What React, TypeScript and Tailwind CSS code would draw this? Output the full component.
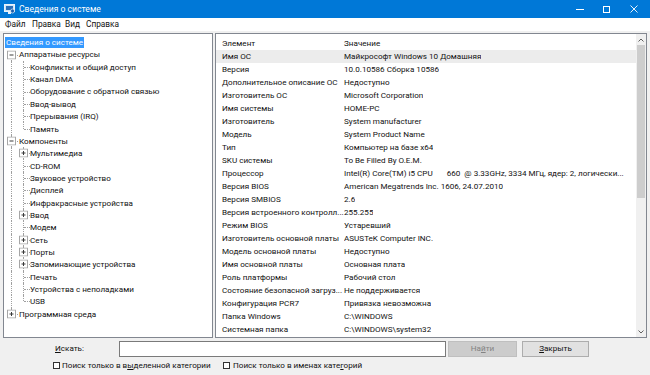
import React from 'react';

type TreeItem = {
    label: string;
    level: 0 | 1 | 2;
    box?: 'plus' | 'minus';
    first?: boolean;
    last?: boolean;
    selected?: boolean;
};

const tree: TreeItem[] = [
    { label: 'Сведения о системе', level: 0, selected: true },
    { label: 'Аппаратные ресурсы', level: 1, box: 'minus', first: true },
    { label: 'Конфликты и общий доступ', level: 2 },
    { label: 'Канал DMA', level: 2 },
    { label: 'Оборудование с обратной связью', level: 2 },
    { label: 'Ввод-вывод', level: 2 },
    { label: 'Прерывания (IRQ)', level: 2 },
    { label: 'Память', level: 2, last: true },
    { label: 'Компоненты', level: 1, box: 'minus' },
    { label: 'Мультимедиа', level: 2, box: 'plus' },
    { label: 'CD-ROM', level: 2 },
    { label: 'Звуковое устройство', level: 2 },
    { label: 'Дисплей', level: 2 },
    { label: 'Инфракрасные устройства', level: 2 },
    { label: 'Ввод', level: 2, box: 'plus' },
    { label: 'Модем', level: 2 },
    { label: 'Сеть', level: 2, box: 'plus' },
    { label: 'Порты', level: 2, box: 'plus' },
    { label: 'Запоминающие устройства', level: 2, box: 'plus' },
    { label: 'Печать', level: 2 },
    { label: 'Устройства с неполадками', level: 2 },
    { label: 'USB', level: 2, last: true },
    { label: 'Программная среда', level: 1, box: 'plus', last: true },
];

const rows: [string, string][] = [
    ['Имя ОС', 'Майкрософт Windows 10 Домашняя'],
    ['Версия', '10.0.10586 Сборка 10586'],
    ['Дополнительное описание ОС', 'Недоступно'],
    ['Изготовитель ОС', 'Microsoft Corporation'],
    ['Имя системы', 'HOME-PC'],
    ['Изготовитель', 'System manufacturer'],
    ['Модель', 'System Product Name'],
    ['Тип', 'Компьютер на базе x64'],
    ['SKU системы', 'To Be Filled By O.E.M.'],
    ['Процессор', 'Intel(R) Core(TM) i5 CPU       660  @ 3.33GHz, 3334 МГц, ядер: 2, логически...'],
    ['Версия BIOS', 'American Megatrends Inc. 1606, 24.07.2010'],
    ['Версия SMBIOS', '2.6'],
    ['Версия встроенного контролл...', '255.255'],
    ['Режим BIOS', 'Устаревший'],
    ['Изготовитель основной платы', 'ASUSTeK Computer INC.'],
    ['Модель основной платы', 'Недоступно'],
    ['Имя основной платы', 'Основная плата'],
    ['Роль платформы', 'Рабочий стол'],
    ['Состояние безопасной загруз...', 'Не поддерживается'],
    ['Конфигурация PCR7', 'Привязка невозможна'],
    ['Папка Windows', 'C:\\WINDOWS'],
    ['Системная папка', 'C:\\WINDOWS\\system32'],
];

function ExpandBox({ kind }: { kind: 'plus' | 'minus' }) {
    return (
        <svg width="9" height="9" viewBox="0 0 9 9" className="absolute left-[1px] top-1/2 -translate-y-1/2">
            <rect x="0.5" y="0.5" width="8" height="8" fill="#fff" stroke="#a6a6a6" />
            <line x1="2.5" y1="4.5" x2="6.5" y2="4.5" stroke="#3a3a3a" />
            {kind === 'plus' && <line x1="4.5" y1="2.5" x2="4.5" y2="6.5" stroke="#3a3a3a" />}
        </svg>
    );
}

// one 12px indent column of the tree with its dotted connector lines
function Guide({ vert, horiz, box }: { vert: 'full' | 'top' | 'bottom' | 'none'; horiz?: boolean; box?: 'plus' | 'minus' }) {
    return (
        <div className="relative w-[12px] h-full shrink-0">
            {vert === 'full' && <div className="absolute left-[5px] top-0 bottom-0 border-l border-dotted border-[#a0a0a0]" />}
            {vert === 'top' && <div className="absolute left-[5px] top-0 h-1/2 border-l border-dotted border-[#a0a0a0]" />}
            {vert === 'bottom' && <div className="absolute left-[5px] top-1/2 bottom-0 border-l border-dotted border-[#a0a0a0]" />}
            {horiz && <div className="absolute left-[6px] right-0 top-1/2 border-t border-dotted border-[#a0a0a0]" />}
            {box && <ExpandBox kind={box} />}
        </div>
    );
}

function TreeRow({ item, parentLastDone }: { item: TreeItem; parentLastDone: boolean }) {
    if (item.level === 0) {
        return (
            <div className="h-[12.35px] flex items-center">
                <span className="bg-[#3399ff] text-white px-[1px] leading-[11px]">{item.label}</span>
            </div>
        );
    }
    if (item.level === 1) {
        return (
            <div className="h-[12.35px] flex items-center pl-[1px]">
                <Guide vert={item.first ? 'bottom' : item.last ? 'top' : 'full'} horiz box={item.box} />
                <span className="pl-[1px]">{item.label}</span>
            </div>
        );
    }
    return (
        <div className="h-[12.35px] flex items-center pl-[1px]">
            <Guide vert={parentLastDone ? 'none' : 'full'} />
            <Guide vert={item.last ? 'top' : 'full'} horiz box={item.box} />
            <span>{item.label}</span>
        </div>
    );
}

function Underline({ children }: { children: React.ReactNode }) {
    return <span className="underline underline-offset-1">{children}</span>;
}

export default function App() {
    const lastRootIdx = tree.findIndex((t) => t.level === 1 && t.last);

    return (
        <div className="w-[650px] h-[375px] bg-[#f0f0f0] flex flex-col text-[8.1px] text-[#111] font-['Roboto','Noto_Sans',sans-serif] overflow-hidden">
            {/* title bar */}
            <div className="h-[18px] bg-[#0078d7] flex items-center text-white shrink-0">
                <svg width="11" height="10" viewBox="0 0 11 10" className="ml-[4px]">
                    <rect x="0.5" y="0.5" width="10" height="7" fill="#cfe6f7" stroke="#e8f2fb" />
                    <rect x="2" y="2" width="7" height="4" fill="#2a6fb8" />
                    <rect x="4" y="8" width="3" height="2" fill="#e8f2fb" />
                    <circle cx="8.5" cy="7" r="2" fill="#1b5fae" stroke="#fff" strokeWidth="0.6" />
                </svg>
                <span className="ml-[4px] text-[8.6px]">Сведения о системе</span>
                <div className="ml-auto flex items-center h-full pr-[3px]">
                    <div className="w-[27px] h-full flex items-center justify-center">
                        <div className="w-[8px] border-t border-white" />
                    </div>
                    <div className="w-[27px] h-full flex items-center justify-center">
                        <div className="w-[7px] h-[7px] border border-white" />
                    </div>
                    <div className="w-[27px] h-full flex items-center justify-center">
                        <svg width="8" height="8" viewBox="0 0 8 8">
                            <path d="M0.5 0.5 L7.5 7.5 M7.5 0.5 L0.5 7.5" stroke="#fff" strokeWidth="0.9" />
                        </svg>
                    </div>
                </div>
            </div>

            {/* menu */}
            <div className="h-[13px] bg-white flex items-center shrink-0 pl-[5px] text-[8.3px]">
                <span className="w-[27px]">Файл</span>
                <span className="w-[33px]">Правка</span>
                <span className="w-[21px]">Вид</span>
                <span>Справка</span>
            </div>

            {/* panels */}
            <div className="flex gap-[2px] px-[3px] pt-[2px] h-[307px] shrink-0">
                <div className="w-[210px] h-full bg-white border border-[#828790] pt-[2px] pl-[1px] overflow-hidden">
                    {tree.map((item, i) => (
                        <TreeRow key={i} item={item} parentLastDone={i > lastRootIdx} />
                    ))}
                </div>

                <div className="flex-1 h-full bg-white border border-[#828790] flex overflow-hidden">
                    <div className="flex-1 flex flex-col">
                        <div className="h-[16px] flex items-center pt-[2px] shrink-0">
                            <div className="w-[128px] pl-[6px]">Элемент</div>
                            <div>Значение</div>
                        </div>
                        {rows.map(([k, v], i) => (
                            <div key={i} className={`h-[13px] flex items-center shrink-0 ${i === 0 ? 'bg-[#ececec]' : ''}`}>
                                <div className="w-[128px] pl-[6px] whitespace-nowrap overflow-hidden">{k}</div>
                                <div className="whitespace-pre overflow-hidden">{v}</div>
                            </div>
                        ))}
                    </div>
                    {/* scrollbar */}
                    <div className="w-[10px] bg-[#f0f0f0] flex flex-col items-center">
                        <div className="h-[11px] flex items-center justify-center">
                            <svg width="6" height="4" viewBox="0 0 6 4"><path d="M0.5 3.5 L3 1 L5.5 3.5" stroke="#606060" fill="none" /></svg>
                        </div>
                        <div className="w-[8px] h-[153px] bg-[#cdcdcd]" />
                        <div className="flex-1" />
                        <div className="h-[11px] flex items-center justify-center">
                            <svg width="6" height="4" viewBox="0 0 6 4"><path d="M0.5 0.5 L3 3 L5.5 0.5" stroke="#606060" fill="none" /></svg>
                        </div>
                    </div>
                </div>
            </div>

            {/* search */}
            <div className="flex-1 flex flex-col pt-[2px]">
                <div className="h-[17px] flex items-center">
                    <span className="ml-[55px] w-[64px]"><Underline>И</Underline>скать:</span>
                    <div className="w-[327px] h-[16px] bg-white border border-[#7a7a7a]" />
                    <div className="ml-[2px] w-[69px] h-[16px] bg-[#cccccc] border border-[#bfbfbf] flex items-center justify-center text-[#838383]">
                        <span>На<Underline>й</Underline>ти</span>
                    </div>
                    <div className="ml-[5px] w-[67px] h-[16px] bg-[#e1e1e1] border border-[#adadad] flex items-center justify-center">
                        <span><Underline>З</Underline>акрыть</span>
                    </div>
                </div>
                <div className="h-[14px] flex items-center mt-[1px]">
                    <div className="ml-[53px] w-[7px] h-[7px] border border-[#333] bg-white" />
                    <span className="ml-[2px] w-[160px] whitespace-nowrap">Поиск только в в<Underline>ы</Underline>деленной категории</span>
                    <div className="ml-[1px] w-[7px] h-[7px] border border-[#333] bg-white" />
                    <span className="ml-[3px] whitespace-nowrap">Поиск только в именах кате<Underline>г</Underline>орий</span>
                </div>
            </div>
        </div>
    );
}
